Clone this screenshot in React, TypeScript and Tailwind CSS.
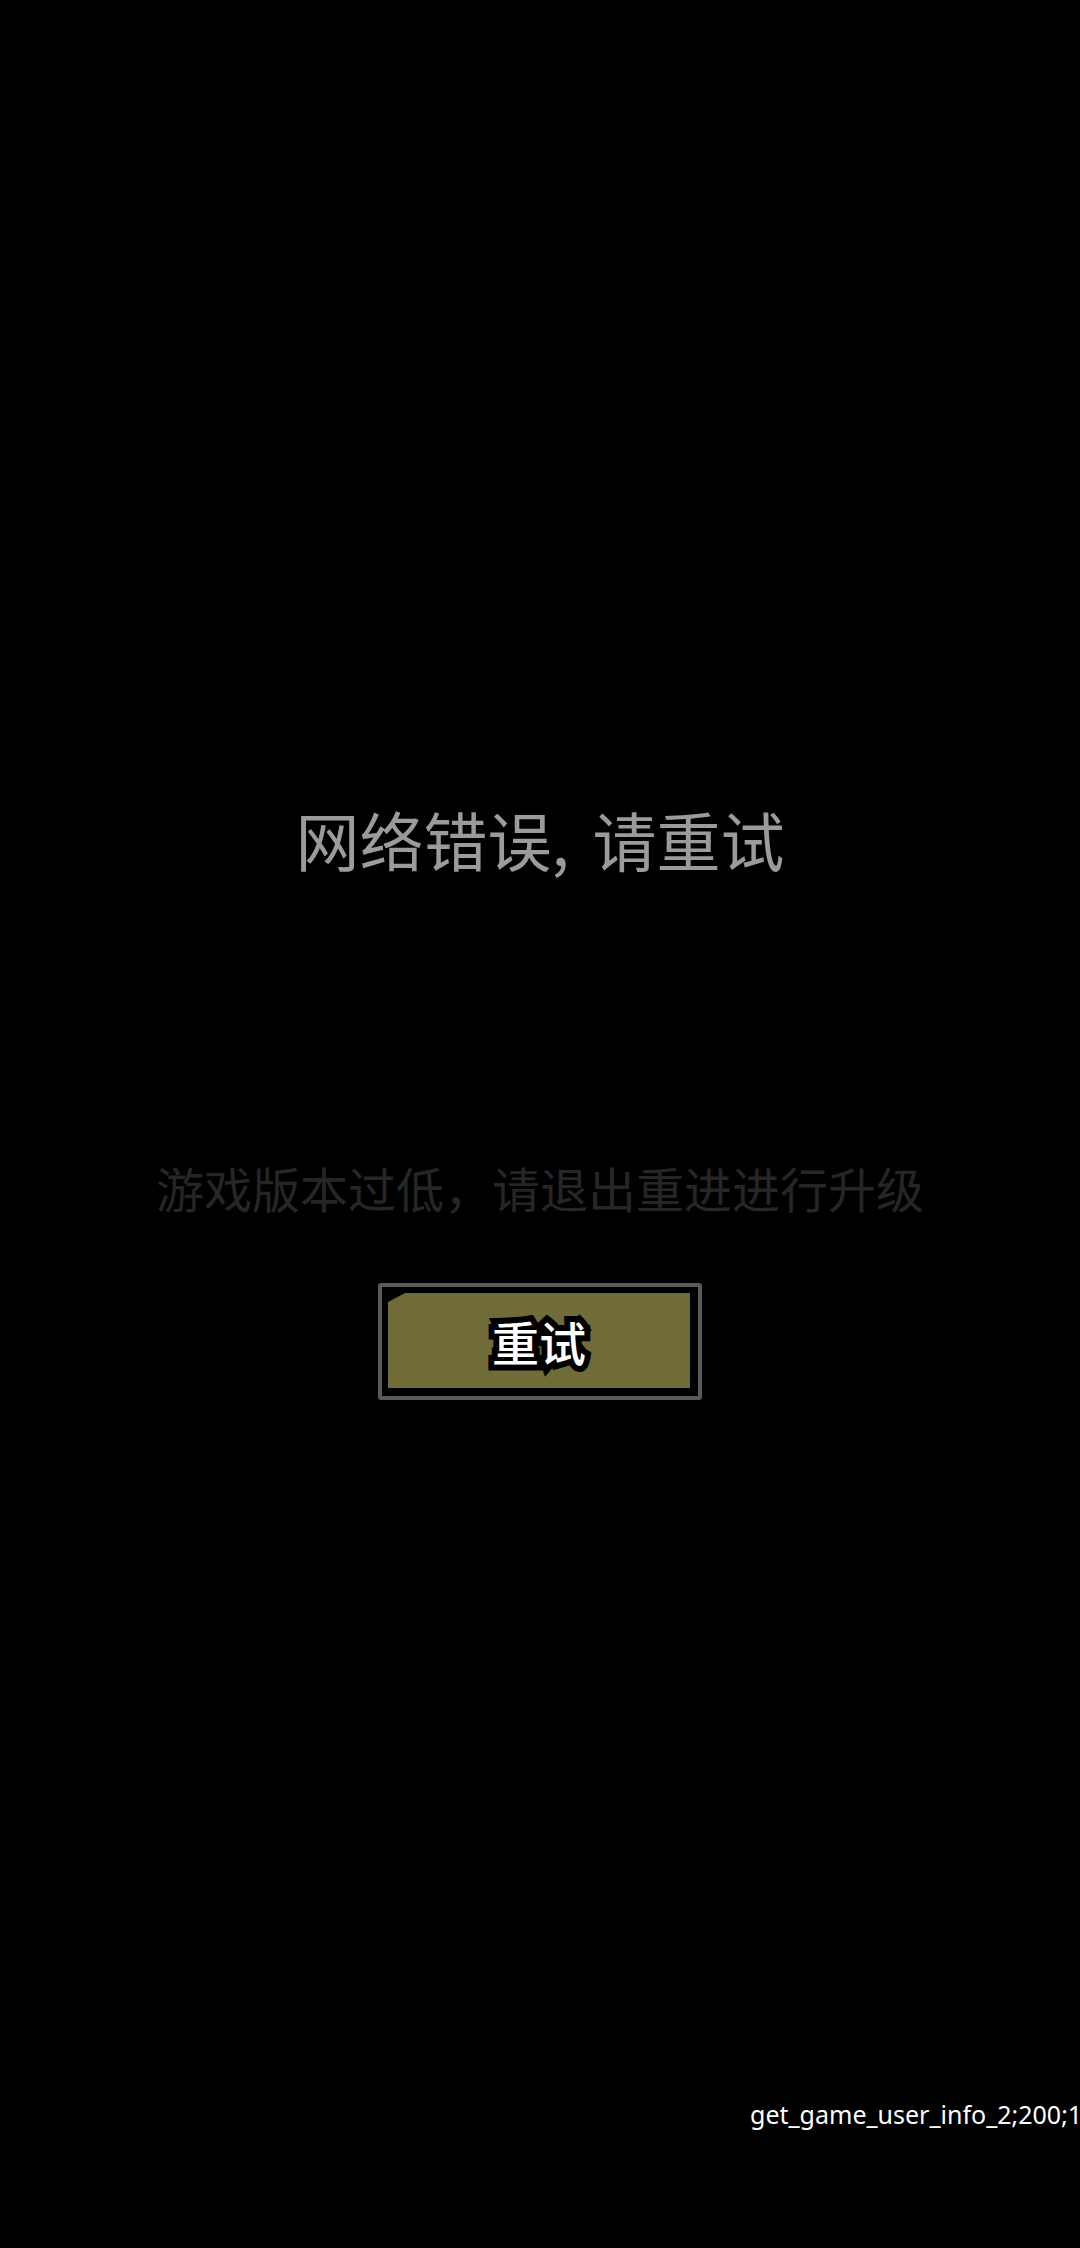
export default function App() {
  return (
    <div className="flex h-[2248px] w-[1080px] flex-col items-center overflow-hidden bg-black pt-[806px] font-['Noto_Sans_CJK_SC',sans-serif]">
      <div className="h-[64px] whitespace-nowrap text-[64px] leading-[64px] text-[#9b9b9b]">
        网络错误<span className="mr-[9px]">,</span> 请重试
      </div>

      <div className="mt-[293px] h-[48px] whitespace-nowrap text-[48px] leading-[48px] text-[#262626]">游戏版本过低，请退出重进进行升级</div>

      <button className="mt-[72px] flex h-[117px] w-[324px] rounded-[3px] border-[4px] border-[#5a5a5a] bg-black pb-[8px] pl-[6px] pr-[8px] pt-[6px]">
        <div className="flex flex-1 items-center justify-center bg-[#6f6c39] [clip-path:polygon(17px_0,100%_0,100%_100%,0_100%,0_9px)]">
          <span className="text-[47px] font-medium leading-none text-white [-webkit-text-stroke:12px_#000] [paint-order:stroke_fill]">重试</span>
        </div>
      </button>

      <div className="mt-[698px] w-full overflow-hidden pl-[750px]">
        <div className="whitespace-nowrap font-['Noto_Sans',sans-serif] text-[25px] leading-[32px] text-white">get_game_user_info_2;200;1001</div>
      </div>
    </div>
  );
}
